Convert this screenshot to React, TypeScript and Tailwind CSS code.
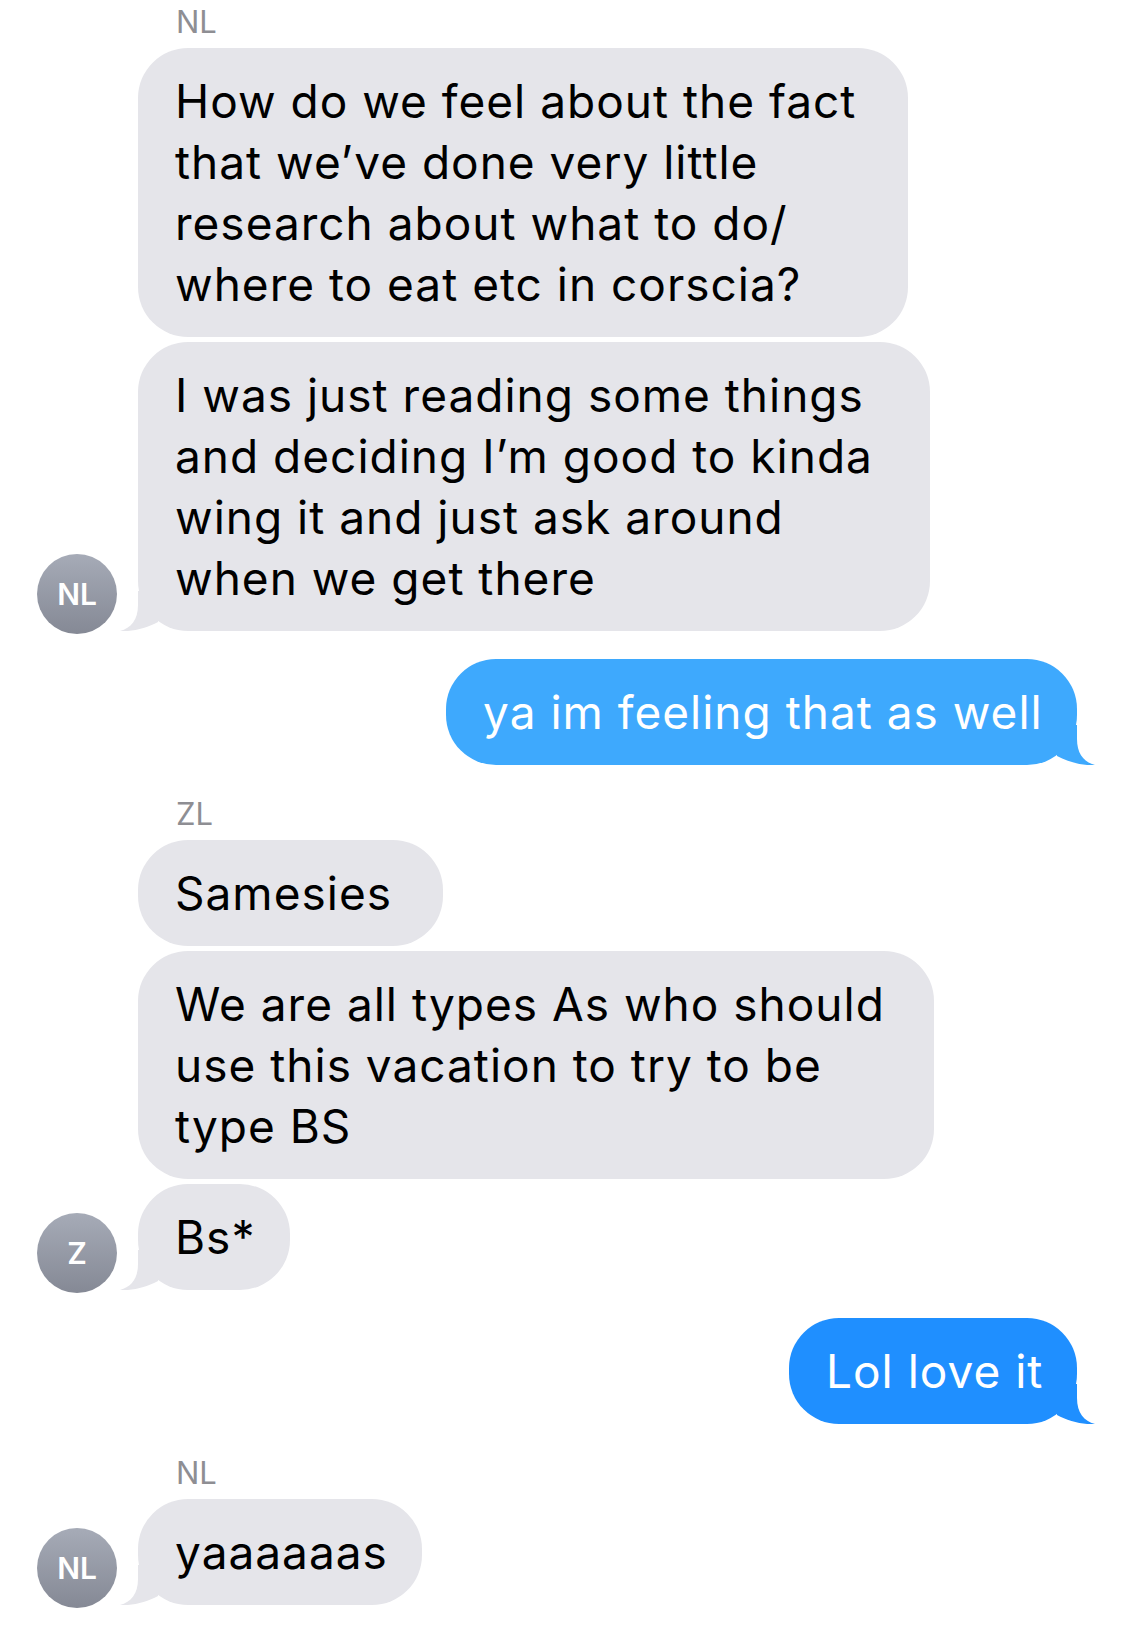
import React from 'react';

type Msg = {
  lines: string[];
  width: string;
};

type Group =
  | { kind: 'in'; sender: string; initials: string; messages: Msg[] }
  | { kind: 'out'; color: string; messages: Msg[] };

const groups: Group[] = [
  {
    kind: 'in',
    sender: 'NL',
    initials: 'NL',
    messages: [
      {
        width: 'w-[770px]',
        lines: [
          'How do we feel about the fact',
          'that we\u2019ve done very little',
          'research about what to do/',
          'where to eat etc in corscia?',
        ],
      },
      {
        width: 'w-[792px]',
        lines: [
          'I was just reading some things',
          'and deciding I\u2019m good to kinda',
          'wing it and just ask around',
          'when we get there',
        ],
      },
    ],
  },
  {
    kind: 'out',
    color: 'light',
    messages: [{ width: 'w-[631px]', lines: ['ya im feeling that as well'] }],
  },
  {
    kind: 'in',
    sender: 'ZL',
    initials: 'Z',
    messages: [
      { width: 'w-[305px]', lines: ['Samesies'] },
      {
        width: 'w-[796px]',
        lines: ['We are all types As who should', 'use this vacation to try to be', 'type BS'],
      },
      { width: 'w-[152px]', lines: ['Bs*'] },
    ],
  },
  {
    kind: 'out',
    color: 'dark',
    messages: [{ width: 'w-[288px]', lines: ['Lol love it'] }],
  },
  {
    kind: 'in',
    sender: 'NL',
    initials: 'NL',
    messages: [{ width: 'w-[284px]', lines: ['yaaaaaas'] }],
  },
];

function Tail({ side, fill }: { side: 'left' | 'right'; fill: string }) {
  if (side === 'left') {
    return (
      <svg
        className="absolute bottom-0 left-[-18px]"
        width="40"
        height="40"
        viewBox="0 0 40 40"
        aria-hidden
      >
        <path d="M18 0 L18 14 C18 29 11 37 0 40 C12 41 27 37 38 31 L38 0 Z" fill={fill} />
      </svg>
    );
  }
  return (
    <svg
      className="absolute bottom-0 right-[-18px]"
      width="40"
      height="40"
      viewBox="0 0 40 40"
      aria-hidden
    >
      <path d="M22 0 L22 14 C22 29 29 37 40 40 C28 41 13 37 2 31 L2 0 Z" fill={fill} />
    </svg>
  );
}

function Bubble({
  msg,
  tail,
  tone,
}: {
  msg: Msg;
  tail: boolean;
  tone: 'gray' | 'light' | 'dark';
}) {
  const bg =
    tone === 'gray' ? 'bg-[#e5e5ea] text-black' : tone === 'light' ? 'bg-[#3ea9fd] text-white' : 'bg-[#1f8fff] text-white';
  const fill = tone === 'gray' ? '#e5e5ea' : tone === 'light' ? '#3ea9fd' : '#1f8fff';
  return (
    <div
      className={`relative ${msg.width} ${bg} rounded-[50px] pl-[37px] pr-[28px] pt-[23px] pb-[22px] text-[46px] leading-[61px] tracking-[1px] whitespace-nowrap`}
    >
      {msg.lines.map((line, i) => (
        <div key={i}>{line}</div>
      ))}
      {tail && <Tail side={tone === 'gray' ? 'left' : 'right'} fill={fill} />}
    </div>
  );
}

function Avatar({ initials }: { initials: string }) {
  return (
    <div className="flex h-[80px] w-[80px] items-center justify-center rounded-full bg-gradient-to-b from-[#a6abb7] to-[#858995] text-[30px] font-semibold text-white">
      {initials}
    </div>
  );
}

export default function App() {
  return (
    <div
      className="min-h-[1645px] w-[1125px] bg-white pt-[4px]"
      style={{ fontFamily: 'Inter, "Noto Sans", "Liberation Sans", sans-serif' }}
    >
      <div className="flex flex-col gap-[28px]">
        {groups.map((g, gi) =>
          g.kind === 'in' ? (
            <div key={gi} className={`flex items-end ${gi > 0 ? 'pt-[3px]' : ''}`}>
              <div className="flex w-[138px] shrink-0 justify-start pl-[37px] -mb-[3px]">
                <Avatar initials={g.initials} />
              </div>
              <div className="flex flex-col items-start gap-[5px]">
                <div className="mb-[3px] h-[36px] pl-[38px] text-[31px] leading-[36px] text-[#8e8e93]">
                  {g.sender}
                </div>
                {g.messages.map((m, mi) => (
                  <Bubble key={mi} msg={m} tone="gray" tail={mi === g.messages.length - 1} />
                ))}
              </div>
            </div>
          ) : (
            <div key={gi} className="flex flex-col items-end gap-[5px] pr-[48px]">
              {g.messages.map((m, mi) => (
                <Bubble
                  key={mi}
                  msg={m}
                  tone={g.color === 'light' ? 'light' : 'dark'}
                  tail={mi === g.messages.length - 1}
                />
              ))}
            </div>
          )
        )}
      </div>
    </div>
  );
}
